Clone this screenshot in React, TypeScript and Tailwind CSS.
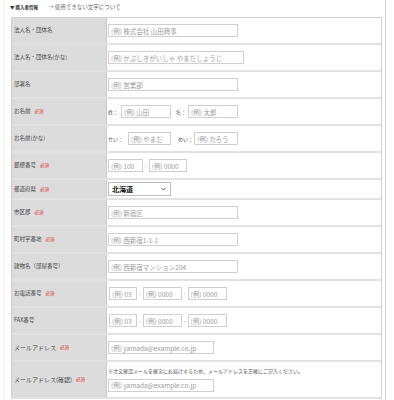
import React from "react";

const inputCls =
  "h-[13px] border border-[#cfcfcf] bg-white px-[2px] text-[6.5px] text-[#333] outline-none placeholder:text-[#9a9a9a]";

function Required() {
  return <span className="ml-[4px] text-[4.5px] text-[#e53935]">必須</span>;
}

function Row({
  label,
  required,
  className = "h-[27px]",
  labelClass = "text-[5.5px]",
  children,
}: {
  label: string;
  required?: boolean;
  className?: string;
  labelClass?: string;
  children: React.ReactNode;
}) {
  return (
    <div className={`flex border-b-2 border-[#e2e2e2] ${className}`}>
      <div className="flex w-[95px] shrink-0 items-center border-r border-[#c9c9c9] bg-[#dcdcdc] pl-[2px]">
        <span className={`${labelClass} text-[#444]`}>{label}</span>
        {required && <Required />}
      </div>
      <div className="flex flex-1 items-center pl-[1px]">{children}</div>
    </div>
  );
}

function Dash() {
  return <span className="mx-[2px] text-[5px] text-[#555]">-</span>;
}

export default function App() {
  return (
    <div className="h-[400px] w-[394px] overflow-hidden bg-white font-['Noto_Sans_CJK_JP',sans-serif]">
      <div className="ml-[4px] h-[400px] w-[382px] border-l border-r border-l-[#f0f0f0] border-r-[#cfcfcf] border-r-dotted">
        <div className="flex h-[14px] items-center pl-[5px]">
          <span className="text-[4.5px] font-bold text-[#333]">▼ 購入者情報</span>
          <span className="ml-[10px] text-[5.5px] text-[#666]">→ 使用できない文字について</span>
        </div>

        <div className="mt-[3px] ml-[6px] w-[371px] border border-b-0 border-[#cfcfcf]">
          <Row label="法人名・団体名">
            <input className={`${inputCls} w-[130px]`} placeholder="(例) 株式会社 山田商事" />
          </Row>
          <Row label="法人名・団体名(かな)">
            <input className={`${inputCls} w-[136px]`} placeholder="(例) かぶしきがいしゃ やまだしょうじ" />
          </Row>
          <Row label="部署名">
            <input className={`${inputCls} w-[130px]`} placeholder="(例) 営業部" />
          </Row>
          <Row label="お名前" required>
            <span className="text-[5px] text-[#555]">姓：</span>
            <input className={`${inputCls} ml-[3px] w-[50px]`} placeholder="(例) 山田" />
            <span className="ml-[5px] text-[5px] text-[#555]">名：</span>
            <input className={`${inputCls} ml-[2px] w-[50px]`} placeholder="(例) 太郎" />
          </Row>
          <Row label="お名前(かな)">
            <span className="text-[5px] text-[#555]">せい：</span>
            <input className={`${inputCls} ml-[5px] w-[43px]`} placeholder="(例) やまだ" />
            <span className="ml-[7px] text-[5px] text-[#555]">めい：</span>
            <input className={`${inputCls} ml-[1px] w-[44px]`} placeholder="(例) たろう" />
          </Row>
          <Row label="郵便番号" required>
            <input className={`${inputCls} w-[35px]`} placeholder="(例) 100" />
            <Dash />
            <input className={`${inputCls} w-[38px]`} placeholder="(例) 0000" />
          </Row>
          <Row label="都道府県" required className="h-[20px]">
            <div className="relative h-[14px] w-[63px]">
              <select className="block h-[14px] w-[63px] appearance-none border border-[#bdbdbd] bg-white pl-[3px] text-[7px] font-semibold leading-none text-[#111] outline-none">
                <option>北海道</option>
              </select>
              <svg
                className="pointer-events-none absolute right-[5px] top-[5px] h-[4px] w-[5px]"
                viewBox="0 0 10 6"
                fill="none"
                stroke="#333"
                strokeWidth="1.6"
              >
                <path d="M1 1l4 4 4-4" />
              </svg>
            </div>
          </Row>
          <Row label="市区郡" required>
            <input className={`${inputCls} w-[130px]`} placeholder="(例) 新宿区" />
          </Row>
          <Row label="町村字番地" required>
            <input className={`${inputCls} w-[130px]`} placeholder="(例) 西新宿1-1-1" />
          </Row>
          <Row label="建物名（部屋番号）">
            <input className={`${inputCls} w-[130px]`} placeholder="(例) 西新宿マンション204" />
          </Row>
          <Row label="お電話番号" required>
            <input className={`${inputCls} ml-[1px] w-[28px]`} placeholder="(例) 03" />
            <Dash />
            <input className={`${inputCls} w-[39px]`} placeholder="(例) 0000" />
            <Dash />
            <input className={`${inputCls} w-[39px]`} placeholder="(例) 0000" />
          </Row>
          <Row label="FAX番号">
            <input className={`${inputCls} ml-[1px] w-[28px]`} placeholder="(例) 03" />
            <Dash />
            <input className={`${inputCls} w-[39px]`} placeholder="(例) 0000" />
            <Dash />
            <input className={`${inputCls} w-[39px]`} placeholder="(例) 0000" />
          </Row>
          <Row label="メールアドレス" required labelClass="text-[6px]">
            <input className={`${inputCls} w-[106px]`} placeholder="(例) yamada@example.co.jp" />
          </Row>
          <Row label="メールアドレス(確認)" required labelClass="text-[6px]" className="h-[37px]">
            <div className="flex flex-col">
              <span className="text-[5px] text-[#555]">
                ※注文確認メールを確実にお届けするため、メールアドレスを正確にご記入ください。
              </span>
              <input className={`${inputCls} mt-[4px] w-[106px]`} placeholder="(例) yamada@example.co.jp" />
            </div>
          </Row>
        </div>
      </div>
    </div>
  );
}
